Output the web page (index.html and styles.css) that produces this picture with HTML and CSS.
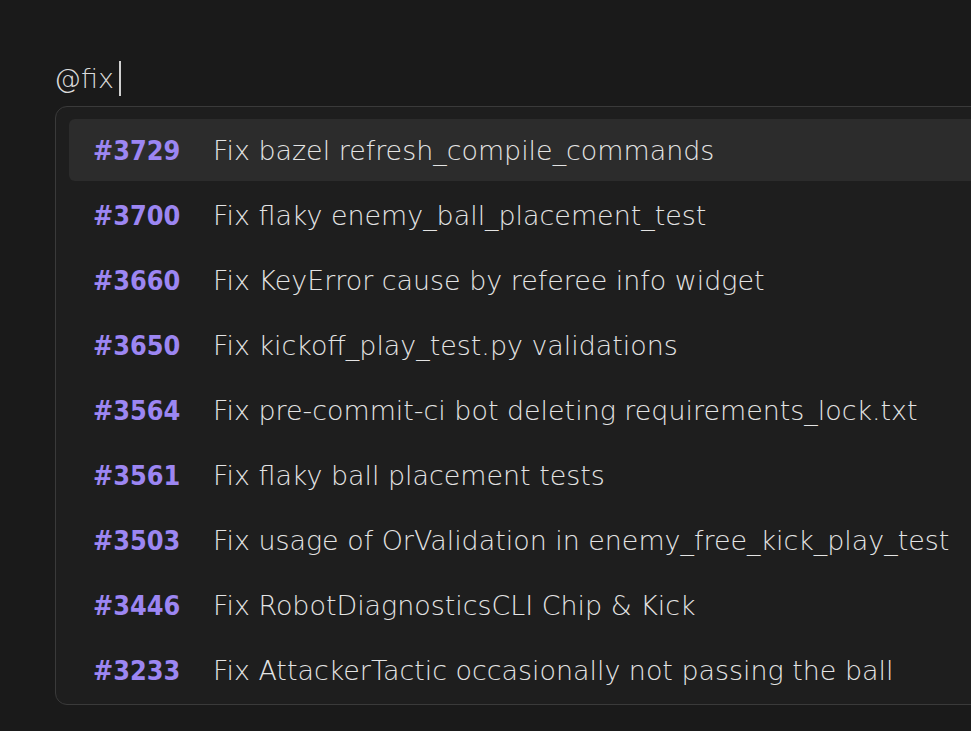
FILE: index.html
```html
<!DOCTYPE html>
<html>
<head>
<meta charset="utf-8">
<link rel="stylesheet" href="styles.css">
</head>
<body>
<div class="editor">
  <div class="input"><span>@fix</span><span class="caret"></span></div>
  <div class="popover">
    <ul class="list">
      <li class="item active"><span class="num">#3729</span><span class="title">Fix bazel refresh_compile_commands</span></li>
      <li class="item"><span class="num">#3700</span><span class="title">Fix flaky enemy_ball_placement_test</span></li>
      <li class="item"><span class="num">#3660</span><span class="title">Fix KeyError cause by referee info widget</span></li>
      <li class="item"><span class="num">#3650</span><span class="title">Fix kickoff_play_test.py validations</span></li>
      <li class="item"><span class="num">#3564</span><span class="title">Fix pre-commit-ci bot deleting requirements_lock.txt</span></li>
      <li class="item"><span class="num">#3561</span><span class="title">Fix flaky ball placement tests</span></li>
      <li class="item"><span class="num">#3503</span><span class="title">Fix usage of OrValidation in enemy_free_kick_play_test</span></li>
      <li class="item"><span class="num">#3446</span><span class="title">Fix RobotDiagnosticsCLI Chip &amp; Kick</span></li>
      <li class="item"><span class="num">#3233</span><span class="title">Fix AttackerTactic occasionally not passing the ball</span></li>
    </ul>
  </div>
</div>
</body>
</html>
```

FILE: styles.css
```css
html, body {
  margin: 0;
  padding: 0;
  background: #1a1a1a;
  overflow: hidden;
}
body {
  width: 971px;
  height: 731px;
  font-family: "DejaVu Sans", "Open Sans", sans-serif;
  color: #d9d9d9;
}
.editor {
  padding: 58px 0 0 55px;
}
.input {
  display: flex;
  align-items: center;
  height: 40px;
  font-size: 27px;
  font-weight: 200;
  color: #dadada;
  margin-left: -1px;
}
.caret {
  width: 1.5px;
  height: 35px;
  background: #d0d0d0;
  margin-left: 5px;
}
.popover {
  margin-top: 8px;
  width: 1000px;
  height: 599px;
  box-sizing: border-box;
  border: 1.5px solid #3a3a3a;
  border-radius: 12px;
  background: #1e1e1e;
  padding: 12px 0 0 13px;
  overflow: hidden;
}
.list {
  list-style: none;
  margin: 0;
  padding: 0;
  display: flex;
  flex-direction: column;
  gap: 3px;
}
.item {
  display: flex;
  align-items: center;
  height: 62px;
  padding-left: 24px;
  border-radius: 6px;
  white-space: nowrap;
}
.item.active {
  background: #2c2c2c;
}
.num {
  width: 120px;
  flex: none;
  font-family: "DejaVu Sans Condensed", "DejaVu Sans", sans-serif;
  font-size: 26.8px;
  font-weight: 700;
  color: #9c86f2;
}
.title {
  font-size: 26.9px;
  font-weight: 200;
  color: #e4e4e4;
}
```
